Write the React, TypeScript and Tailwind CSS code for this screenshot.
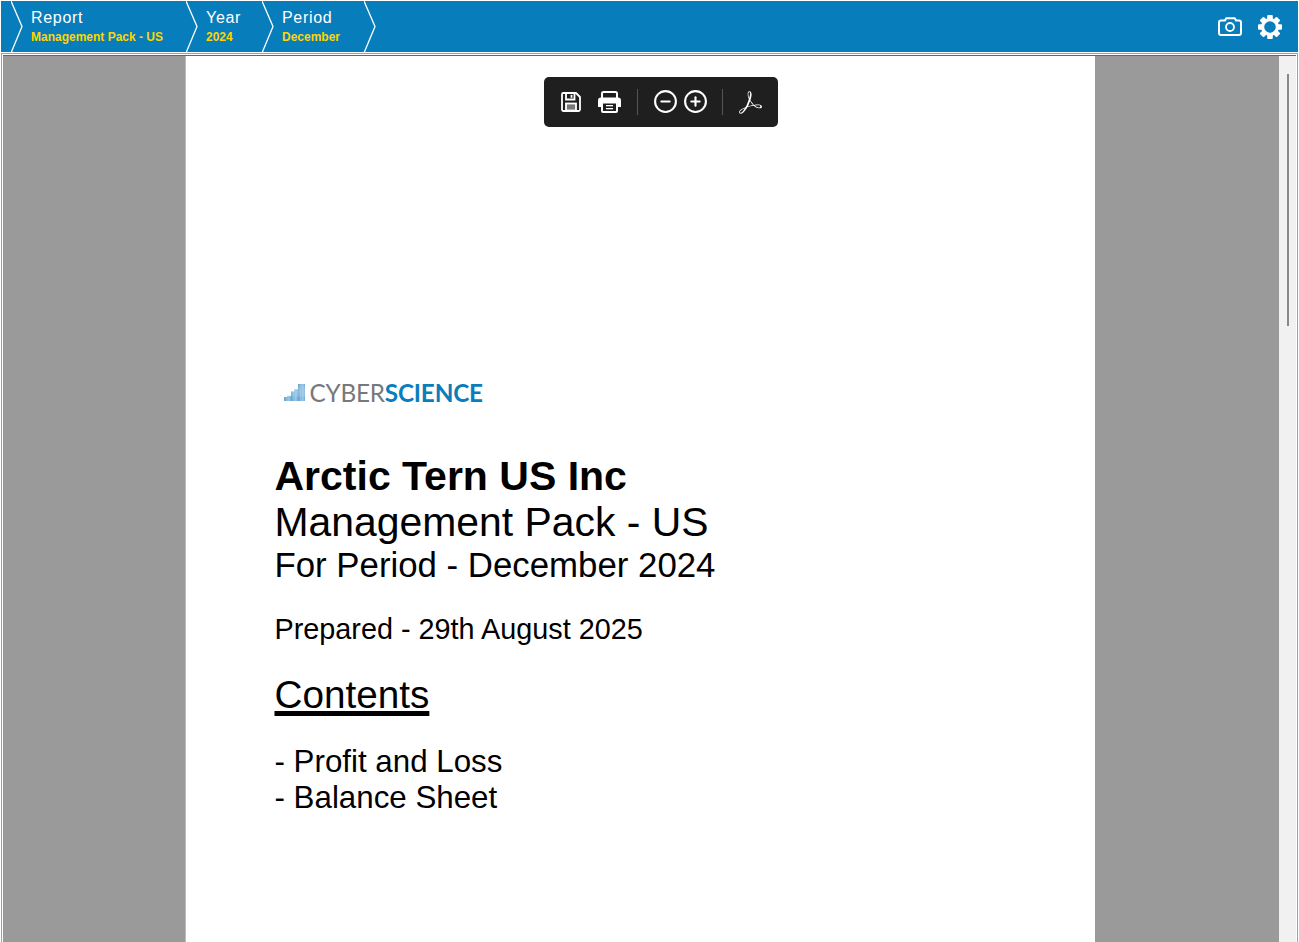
import { FiMinusCircle, FiPlusCircle } from "react-icons/fi";
import { SiAdobeacrobatreader } from "react-icons/si";

function Chevron() {
  return (
    <svg className="absolute right-[-12px] top-0 z-10" width="12" height="52" viewBox="0 0 12 52" fill="none">
      <path d="M0 0 L11 25.5 L0 52" stroke="#fff" strokeWidth="1.3" />
    </svg>
  );
}

function Crumb({ label, value, width }: { label: string; value: string; width: string }) {
  return (
    <div className={`relative flex h-full flex-col pl-[20px] ${width}`}>
      <Chevron />
      <span className="mt-[7px] text-[16px] leading-[19px] tracking-[0.7px] text-white">{label}</span>
      <span className="mt-[3px] text-[12px] leading-[14px] font-bold text-[#ffd400]">{value}</span>
    </div>
  );
}

function LogoBars() {
  const cols = [4, 5, 9, 11, 16, 16];
  return (
    <svg width="21" height="18" viewBox="0 0 21 18">
      {cols.map((n, x) =>
        Array.from({ length: n }).map((_, y) =>
          [0, 1.2, 2.4].map((dx) => (
            <rect key={`${x}-${y}-${dx}`} x={x * 3.5 + dx} y={16.2 - y * 1.07} width="0.85" height="0.8" fill="#1f7fc0" />
          )),
        ),
      )}
    </svg>
  );
}

function CameraIcon() {
  return (
    <svg width="24" height="19" viewBox="0 0 24 19" fill="none" stroke="#fff" strokeWidth="2">
      <path d="M3 3.5 H7 L8.2 1.2 H16.8 L18 3.5 H21 Q23 3.5 23 5.5 V16 Q23 18 21 18 H3 Q1 18 1 16 V5.5 Q1 3.5 3 3.5 Z" strokeLinejoin="round" />
      <circle cx="12" cy="10" r="4" strokeWidth="1.8" />
    </svg>
  );
}

function GearIcon() {
  const teeth = [0, 45, 90, 135, 180, 225, 270, 315];
  return (
    <svg width="26" height="26" viewBox="0 0 26 26" fill="none">
      {teeth.map((a) => (
        <rect key={a} x="10.2" y="1" width="5.6" height="6" rx="1" fill="#fff" transform={`rotate(${a} 13 13)`} />
      ))}
      <circle cx="13" cy="13" r="7.4" stroke="#fff" strokeWidth="3.2" />
    </svg>
  );
}

function SaveIcon() {
  return (
    <svg width="20" height="20" viewBox="0 0 20 20" fill="none" stroke="#fff" strokeWidth="1.8">
      <path d="M2 1 H15 L19 5 V17.5 Q19 19 17.5 19 H2.5 Q1 19 1 17.5 V2.5 Q1 1 2 1 Z" strokeLinejoin="round" />
      <path d="M5 1.5 V7.5 H13.5 V1.5" />
      <rect x="9.6" y="2.8" width="1.8" height="3" fill="#fff" stroke="none" />
      <rect x="5" y="11.5" width="10" height="7" fill="#777" />
    </svg>
  );
}

function PrintIcon() {
  return (
    <svg width="23" height="22" viewBox="0 0 23 22" fill="none">
      <path d="M4 8 V2.5 Q4 1 5.5 1 H17.5 Q19 1 19 2.5 V8" stroke="#fff" strokeWidth="2" />
      <path d="M3 6.5 H20 Q23 6.5 23 9.5 V16 H0 V9.5 Q0 6.5 3 6.5 Z" fill="#fff" />
      <rect x="4" y="11.5" width="15" height="9.5" rx="1" fill="#1f1f1f" stroke="#fff" strokeWidth="2" />
      <rect x="8" y="14" width="7" height="1.3" fill="#fff" />
      <rect x="8" y="17" width="7" height="1.3" fill="#fff" />
    </svg>
  );
}

export default function App() {
  return (
    <div className="flex h-[942px] w-[1299px] flex-col overflow-hidden bg-white pt-px pl-px font-['Liberation_Sans',Arial,sans-serif]">
      <header className="flex h-[51px] w-[1297px] shrink-0 items-center bg-[#087dbb]">
        <div className="flex h-full flex-1 pl-[10px]">
          <div className="relative h-full w-0">
            <Chevron />
          </div>
          <Crumb label="Report" value="Management Pack - US" width="w-[175px]" />
          <Crumb label="Year" value="2024" width="w-[76px]" />
          <Crumb label="Period" value="December" width="w-[102px]" />
        </div>
        <div className="flex items-center gap-[15px] pr-[15px] text-white">
          <CameraIcon />
          <GearIcon />
        </div>
      </header>
      <div className="mt-[1px] flex min-h-0 w-[1297px] flex-1 flex-col border-t border-r border-l border-[#8ea3bb] bg-white px-px pt-px">
        <div className="flex min-h-0 flex-1 border-t border-[#666] bg-[#9a9a9a]">
          <main className="relative flex min-h-0 flex-1 justify-center">
            <div className="ml-[-3px] h-full w-[910px] border-l border-[#bdbdbd] bg-white pl-[89px] text-black">
              <div className="flex items-center gap-[5px] pt-[324px] pl-[9px] font-['Lato',sans-serif] text-[24.3px] leading-[26px]">
                <LogoBars />
                <span className="tracking-[-0.2px]">
                  <span className="font-normal text-[#77787b]">CYBER</span>
                  <span className="font-bold text-[#0a7dbb]">SCIENCE</span>
                </span>
              </div>
              <h1 className="mt-[47px] text-[41px] leading-[46px] font-bold">Arctic Tern US Inc</h1>
              <h2 className="text-[40.9px] leading-[46px]">Management Pack - US</h2>
              <p className="text-[34.8px] leading-[40px]">For Period - December 2024</p>
              <p className="mt-[28px] text-[28.8px] leading-[33px]">Prepared - 29th August 2025</p>
              <p className="mt-[27px] text-[38.7px] leading-[43px] underline decoration-[5px] underline-offset-[3px]">Contents</p>
              <div className="mt-[28px] text-[31.3px] leading-[36px]">
                <p>- Profit and Loss</p>
                <p>- Balance Sheet</p>
              </div>
            </div>
            <div className="absolute top-[21px] left-[541px] flex h-[50px] w-[234px] items-center rounded-[5px] bg-[#1f1f1f] pl-[17px] text-white">
              <SaveIcon />
              <div className="ml-[17px]"><PrintIcon /></div>
              <div className="ml-[16px] h-[26px] w-px bg-[#555]" />
              <FiMinusCircle size={25} strokeWidth={2} className="ml-[15px] mb-px" />
              <FiPlusCircle size={25} strokeWidth={2} className="ml-[5px] mb-px" />
              <div className="ml-[14px] h-[26px] w-px bg-[#555]" />
              <SiAdobeacrobatreader size={23} className="ml-[16px]" />
            </div>
          </main>
          <aside className="flex w-[17px] shrink-0 justify-center bg-[#f1f1f1] pt-[18px]">
            <div className="h-[252px] w-[2px] bg-[#888]" />
          </aside>
        </div>
      </div>
    </div>
  );
}
